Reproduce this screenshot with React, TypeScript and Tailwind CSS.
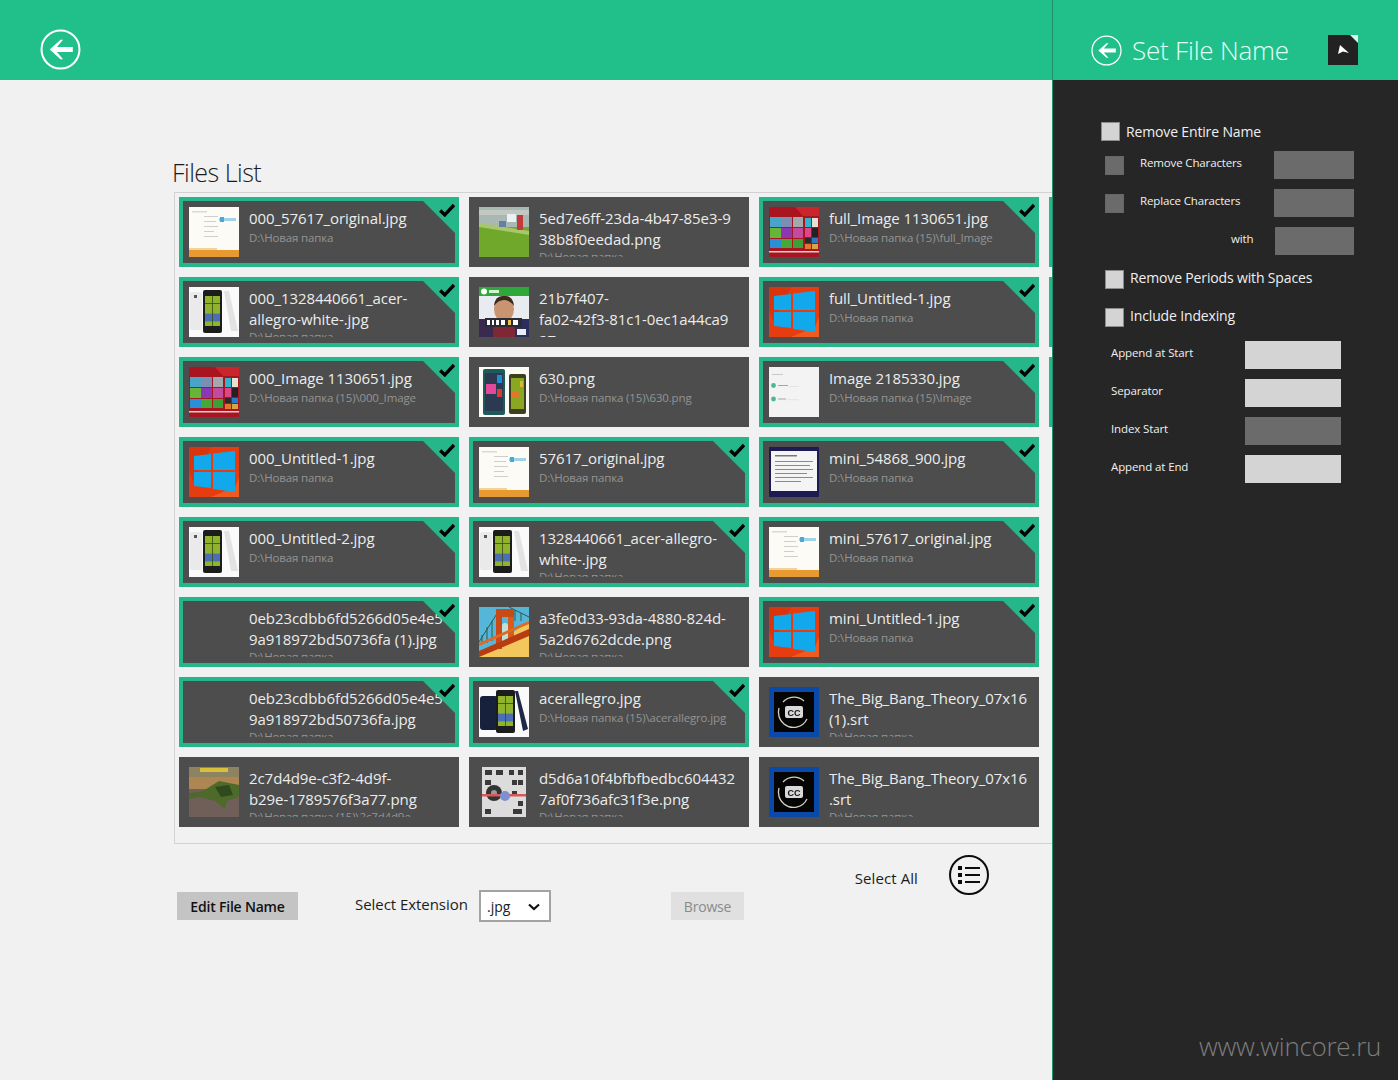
const FONT = "font-['Open_Sans','Liberation_Sans',sans-serif]";

type ThumbKind =
  | "doc" | "phone" | "metro" | "win" | "soccer" | "fifa" | "lumia" | "paper" | "slide"
  | "bridge" | "navy" | "road" | "remote" | "cc" | "none";

type FileItem = { lines: string[]; path: string; thumb: ThumbKind; selected?: boolean };

const files: FileItem[] = [
  { lines: ["000_57617_original.jpg"], path: "D:\\Новая папка", thumb: "doc", selected: true },
  { lines: ["5ed7e6ff-23da-4b47-85e3-9", "38b8f0eedad.png"], path: "D:\\Новая папка", thumb: "soccer" },
  { lines: ["full_Image 1130651.jpg"], path: "D:\\Новая папка (15)\\full_Image", thumb: "metro", selected: true },
  { lines: ["000_1328440661_acer-", "allegro-white-.jpg"], path: "D:\\Новая папка", thumb: "phone", selected: true },
  { lines: ["21b7f407-", "fa02-42f3-81c1-0ec1a44ca9", "27.png"], path: "", thumb: "fifa" },
  { lines: ["full_Untitled-1.jpg"], path: "D:\\Новая папка", thumb: "win", selected: true },
  { lines: ["000_Image 1130651.jpg"], path: "D:\\Новая папка (15)\\000_Image", thumb: "metro", selected: true },
  { lines: ["630.png"], path: "D:\\Новая папка (15)\\630.png", thumb: "lumia" },
  { lines: ["Image 2185330.jpg"], path: "D:\\Новая папка (15)\\Image", thumb: "slide", selected: true },
  { lines: ["000_Untitled-1.jpg"], path: "D:\\Новая папка", thumb: "win", selected: true },
  { lines: ["57617_original.jpg"], path: "D:\\Новая папка", thumb: "doc", selected: true },
  { lines: ["mini_54868_900.jpg"], path: "D:\\Новая папка", thumb: "paper", selected: true },
  { lines: ["000_Untitled-2.jpg"], path: "D:\\Новая папка", thumb: "phone", selected: true },
  { lines: ["1328440661_acer-allegro-", "white-.jpg"], path: "D:\\Новая папка", thumb: "phone", selected: true },
  { lines: ["mini_57617_original.jpg"], path: "D:\\Новая папка", thumb: "doc", selected: true },
  { lines: ["0eb23cdbb6fd5266d05e4e5", "9a918972bd50736fa (1).jpg"], path: "D:\\Новая папка", thumb: "none", selected: true },
  { lines: ["a3fe0d33-93da-4880-824d-", "5a2d6762dcde.png"], path: "D:\\Новая папка", thumb: "bridge" },
  { lines: ["mini_Untitled-1.jpg"], path: "D:\\Новая папка", thumb: "win", selected: true },
  { lines: ["0eb23cdbb6fd5266d05e4e5", "9a918972bd50736fa.jpg"], path: "D:\\Новая папка", thumb: "none", selected: true },
  { lines: ["acerallegro.jpg"], path: "D:\\Новая папка (15)\\acerallegro.jpg", thumb: "navy", selected: true },
  { lines: ["The_Big_Bang_Theory_07x16", "(1).srt"], path: "D:\\Новая папка", thumb: "cc" },
  { lines: ["2c7d4d9e-c3f2-4d9f-", "b29e-1789576f3a77.png"], path: "D:\\Новая папка (15)\\2c7d4d9e", thumb: "road" },
  { lines: ["d5d6a10f4bfbfbedbc604432", "7af0f736afc31f3e.png"], path: "D:\\Новая папка", thumb: "remote" },
  { lines: ["The_Big_Bang_Theory_07x16", ".srt"], path: "D:\\Новая папка", thumb: "cc" },
];

const rows = Array.from({ length: 8 }, (_, i) => files.slice(i * 3, i * 3 + 3));

function Phone({ x, w = 16, y = 7, h = 36 }: { x: number; w?: number; y?: number; h?: number }) {
  const sx = x + 2;
  const sw = w - 4;
  return (
    <g>
      <rect x={x} y={y} width={w} height={h} rx="2" fill="#1c1c1c" />
      <rect x={sx} y={y + 6} width={sw} height={h - 13} fill="#8fb32a" />
      <rect x={sx} y={y + h * 0.55} width={sw} height={h * 0.18} fill="#4a6fb5" />
      <rect x={sx + sw / 2 - 0.4} y={y + 6} width="0.8" height={h - 13} fill="#3c4a14" />
      <rect x={sx} y={y + 13} width={sw} height="0.8" fill="#3c4a14" />
    </g>
  );
}

function Thumb({ kind }: { kind: ThumbKind }) {
  if (kind === "none") return <div className="h-[50px] w-[50px] shrink-0" />;
  return (
    <div className="h-[50px] w-[50px] shrink-0 overflow-hidden">
      <svg viewBox="0 0 50 50" className="h-[50px] w-[50px] blur-[0.4px]">
        {kind === "doc" && (
          <g>
            <rect width="50" height="50" fill="#fdfbf5" />
            <rect x="3" y="4" width="15" height="1.5" fill="#d5dadd" />
            <rect x="15" y="9" width="14" height="1" fill="#cfcfcf" />
            <rect x="15" y="14" width="12" height="1" fill="#cfcfcf" />
            <rect x="15" y="19" width="14" height="1" fill="#cfcfcf" />
            <rect x="15" y="24" width="10" height="1" fill="#cfcfcf" />
            <rect x="15" y="29" width="14" height="1" fill="#cfcfcf" />
            <rect x="30" y="11" width="17" height="3" fill="#9fd3ea" />
            <rect x="31" y="10" width="4" height="5" fill="#4aa9d8" />
            <rect y="43" width="50" height="7" fill="#e89a30" />
            <rect y="41" width="28" height="2" fill="#f3d39d" />
          </g>
        )}
        {kind === "phone" && (
          <g>
            <rect width="50" height="50" fill="#fafafa" />
            <rect x="1" y="5" width="12" height="38" rx="2" fill="#eaeaea" />
            <rect x="5" y="8" width="3" height="3" fill="#555" />
            <Phone x={14} w={19} y={3} h={43} />
            <polygon points="35,4 40,4 49,44 42,44" fill="#e3e3e3" />
          </g>
        )}
        {kind === "metro" && (
          <g>
            <rect width="50" height="50" fill="#a81420" />
            <polygon points="26,0 50,0 50,9 34,9" fill="#c9262c" />
            <rect x="1" y="10" width="11" height="10" fill="#4aa3c9" />
            <rect x="12" y="10" width="11" height="10" fill="#7b8fb5" />
            <rect x="24" y="10" width="10" height="10" fill="#a3a8ac" />
            <rect x="1" y="21" width="11" height="10" fill="#66b538" />
            <rect x="12" y="21" width="11" height="10" fill="#8c38b4" />
            <rect x="24" y="21" width="10" height="10" fill="#c24ba0" />
            <rect x="1" y="32" width="11" height="9" fill="#2b8fd8" />
            <rect x="12" y="32" width="11" height="9" fill="#45a938" />
            <rect x="24" y="32" width="10" height="9" fill="#3f9e36" />
            <rect x="36" y="11" width="6" height="9" fill="#31b3c9" />
            <rect x="43" y="11" width="6" height="9" fill="#e6e0d2" />
            <rect x="36" y="21" width="6" height="9" fill="#e04588" />
            <rect x="43" y="21" width="6" height="9" fill="#222" />
            <rect x="36" y="31" width="6" height="5" fill="#2a2a2a" />
            <rect x="43" y="31" width="6" height="5" fill="#2e78c8" />
            <rect x="36" y="37" width="6" height="5" fill="#e5752b" />
            <rect x="43" y="37" width="6" height="5" fill="#d9a544" />
            <rect y="44" width="50" height="1.5" fill="#e2cfcf" />
          </g>
        )}
        {kind === "win" && (
          <g>
            <rect width="50" height="50" fill="#e53d10" />
            <polygon points="0,0 22,0 4,34 0,24" fill="#d9340c" />
            <polygon points="50,50 22,50 46,40 50,30" fill="#f15a1e" />
            <polygon points="5,9 22,7 22,23 5,23" fill="#12a9ec" />
            <polygon points="24,6.5 46,4 46,23 24,23" fill="#12a9ec" />
            <polygon points="5,25 22,25 22,41 5,39" fill="#12a9ec" />
            <polygon points="24,25 46,25 46,45 24,42" fill="#12a9ec" />
          </g>
        )}
        {kind === "soccer" && (
          <g>
            <rect width="50" height="50" fill="#6fa82b" />
            <rect width="50" height="20" fill="#a9b8b2" />
            <rect y="3" width="50" height="5" fill="#c2c9c3" />
            <rect y="20" width="50" height="30" fill="#6fa82b" />
            <polygon points="0,16 50,24 50,28 0,20" fill="#a6c76b" />
            <rect x="28" y="7" width="9" height="8" fill="#e9f1f4" />
            <rect x="38" y="8" width="6" height="15" fill="#c23a3a" />
            <rect x="20" y="14" width="7" height="6" fill="#647fa3" />
          </g>
        )}
        {kind === "fifa" && (
          <g>
            <rect width="50" height="50" fill="#e8ebef" />
            <rect width="50" height="9" fill="#2fa83a" />
            <circle cx="5" cy="4.5" r="3" fill="#fff" />
            <rect x="10" y="3" width="10" height="3" fill="#d5f0d5" />
            <rect y="32" width="16" height="18" fill="#3a2a4f" />
            <rect x="34" y="32" width="16" height="18" fill="#2c2f5e" />
            <rect x="14" y="34" width="22" height="16" fill="#7f2735" />
            <ellipse cx="25" cy="22" rx="10" ry="13" fill="#c99570" />
            <path d="M15 19 Q16 8 25 9 Q34 8 35 19 Q31 13 25 13 Q19 13 15 19Z" fill="#3b2a1d" />
            <rect x="6" y="31" width="37" height="9" fill="#2b2b33" />
            <rect x="8" y="33" width="3" height="5" fill="#fff" />
            <rect x="13" y="33" width="2" height="5" fill="#fff" />
            <rect x="17" y="33" width="3" height="5" fill="#fff" />
            <rect x="22" y="33" width="4" height="5" fill="#fff" />
            <rect x="29" y="33" width="3" height="5" fill="#f1c34d" />
            <rect x="34" y="33" width="5" height="5" fill="#fff" />
            <rect x="38" y="42" width="9" height="6" fill="#e8eef5" />
          </g>
        )}
        {kind === "lumia" && (
          <g>
            <rect width="50" height="50" fill="#fbfbf6" />
            <rect x="4" y="2" width="22" height="46" rx="2" fill="#1e5a5a" />
            <rect x="6" y="6" width="18" height="38" fill="#2b3a50" />
            <rect x="7" y="17" width="10" height="10" fill="#e3489a" />
            <rect x="18" y="8" width="5" height="8" fill="#1a8fd5" />
            <rect x="18" y="22" width="5" height="8" fill="#d93a3a" />
            <rect x="30" y="7" width="17" height="40" rx="2" fill="#3d3f1f" />
            <rect x="32" y="11" width="13" height="31" fill="#8aa722" />
            <rect x="33" y="24" width="7" height="7" fill="#e0772b" />
            <rect x="41" y="14" width="3" height="6" fill="#d5b933" />
          </g>
        )}
        {kind === "paper" && (
          <g>
            <rect width="50" height="50" fill="#1d1b52" />
            <rect x="2" y="4" width="46" height="40" fill="#f4f4f4" />
            <rect x="6" y="8" width="22" height="1.5" fill="#777" />
            <rect x="6" y="14" width="38" height="1" fill="#8a8a8a" />
            <rect x="6" y="18" width="35" height="1" fill="#8a8a8a" />
            <rect x="6" y="22" width="38" height="1" fill="#8a8a8a" />
            <rect x="6" y="26" width="32" height="1" fill="#8a8a8a" />
            <rect x="6" y="30" width="38" height="1" fill="#8a8a8a" />
            <rect x="6" y="34" width="26" height="1" fill="#8a8a8a" />
          </g>
        )}
        {kind === "slide" && (
          <g>
            <rect width="50" height="50" fill="#f3f3f3" />
            <rect x="3" y="7" width="11" height="1" fill="#c8c8c8" />
            <circle cx="4.5" cy="18.5" r="2.4" fill="#48b89a" />
            <circle cx="4.5" cy="32" r="2.4" fill="#48b89a" />
            <rect x="9" y="18" width="10" height="1" fill="#a5a5a5" />
            <rect x="20" y="19" width="10" height="0.6" fill="#dadada" />
            <rect x="9" y="31.5" width="8" height="1" fill="#a5a5a5" />
            <rect x="18" y="32.5" width="12" height="0.6" fill="#dadada" />
          </g>
        )}
        {kind === "bridge" && (
          <g>
            <rect width="50" height="50" fill="#56b6d9" />
            <polygon points="0,50 50,14 50,50" fill="#f4c75c" />
            <path d="M0 35 L19 5 M50 10 L30 0" stroke="#2f5a4a" strokeWidth="1" />
            <path d="M3 35 L3 28 M8 36 L8 20 M13 34 L13 14 M36 14 L36 3 M42 14 L42 6" stroke="#2f5a4a" strokeWidth="1" />
            <rect x="17" y="2" width="6" height="40" fill="#c84a16" />
            <rect x="29" y="2" width="6" height="30" fill="#d85c1c" />
            <rect x="17" y="2" width="18" height="8" fill="#c84a16" />
            <rect x="23" y="16" width="6" height="22" rx="3" fill="#bfe0d8" />
            <polygon points="0,44 50,22 50,29 0,50" fill="#b83c12" />
            <polygon points="0,36 50,14 50,17 0,39" fill="#e06a22" />
          </g>
        )}
        {kind === "navy" && (
          <g>
            <rect width="50" height="50" fill="#fafafa" />
            <rect x="1" y="9" width="18" height="34" rx="3" fill="#17213c" />
            <Phone x={17} w={19} y={3} h={43} />
            <polygon points="36,4 39,4 49,42 44,44" fill="#1d2947" />
          </g>
        )}
        {kind === "road" && (
          <g>
            <rect width="50" height="50" fill="#6f5f58" />
            <rect width="50" height="10" fill="#8c8460" />
            <rect x="11" y="1" width="28" height="4" fill="#d8c03a" />
            <rect y="10" width="50" height="12" fill="#ad8652" />
            <polygon points="0,26 14,24 30,14 50,18 50,30 38,34 36,42 26,34 10,30 0,32" fill="#4d6a2a" />
            <polygon points="26,20 40,18 44,28 32,30" fill="#2f4a1c" />
          </g>
        )}
        {kind === "remote" && (
          <g>
            <rect width="50" height="50" fill="#4d4d4d" />
            <rect x="3" y="0" width="44" height="50" fill="#dcdcdc" />
            <g fill="#3a3a3a">
              <rect x="6" y="3" width="7" height="5" /><rect x="17" y="3" width="7" height="5" /><rect x="30" y="3" width="5" height="5" /><rect x="39" y="3" width="5" height="5" />
              <rect x="6" y="13" width="6" height="5" /><rect x="33" y="13" width="5" height="5" /><rect x="39" y="13" width="5" height="5" />
              <rect x="33" y="24" width="5" height="5" /><rect x="39" y="34" width="5" height="5" />
              <rect x="6" y="42" width="6" height="5" /><rect x="34" y="42" width="9" height="5" />
            </g>
            <circle cx="15" cy="26" r="8" fill="#333" />
            <circle cx="15" cy="26" r="3" fill="#999" />
            <rect x="3" y="27" width="44" height="2.5" fill="#d8585a" />
            <circle cx="26" cy="29" r="5" fill="#7f8fd0" />
          </g>
        )}
        {kind === "cc" && (
          <g>
            <rect width="50" height="50" fill="#0b49a8" />
            <rect x="5" y="5" width="40" height="40" fill="#050505" />
            <path d="M14 15 A15 15 0 0 1 35 14 M38 32 A15 15 0 0 1 15 37 A15 15 0 0 1 10 21" fill="none" stroke="#d8d0c0" strokeWidth="1.3" />
            <rect x="16" y="19" width="18" height="12" rx="2" fill="#d9d9d9" />
            <text x="25" y="28.5" textAnchor="middle" fontSize="9" fontWeight="700" fill="#111" fontFamily="Liberation Sans">CC</text>
          </g>
        )}
      </svg>
    </div>
  );
}

function FileCard({ item }: { item: FileItem }) {
  return (
    <div className={`relative flex h-[70px] w-[280px] shrink-0 gap-[10px] overflow-hidden bg-[#4d4d4d] p-[10px] ${item.selected ? "ring-4 ring-inset ring-[#25b78a]" : ""}`}>
      <Thumb kind={item.thumb} />
      <div className="h-[50px] min-w-0 flex-1 overflow-hidden pt-px">
        {item.lines.map((line) => (
          <div key={line} className="h-[21px] whitespace-nowrap text-[15px] leading-[21px] tracking-[-0.07px] text-[#ececec]">
            {line}
          </div>
        ))}
        {item.path ? (
          <div className={`whitespace-nowrap text-[11.5px] leading-[16px] tracking-[-0.15px] text-[#949494] ${item.lines.length > 1 ? "-mt-px" : "mt-px"}`}>{item.path}</div>
        ) : null}
      </div>
      {item.selected ? (
        <>
          <div className="absolute right-0 top-0 h-0 w-0 border-l-[40px] border-t-[40px] border-l-transparent border-t-[#25b78a]" />
          <svg viewBox="0 0 16 14" className="absolute right-[4px] top-[6px] h-[14px] w-4">
            <path d="M1.2 7.5 L5.8 11.8 L15 2" fill="none" stroke="#000" strokeWidth="3.4" />
          </svg>
        </>
      ) : null}
    </div>
  );
}

function BackCircle({ size, stroke }: { size: number; stroke: number }) {
  return (
    <svg viewBox="0 0 40 40" width={size} height={size} className="shrink-0">
      <circle cx="20" cy="20" r={19.5 - stroke / 2} fill="none" stroke="#fff" strokeWidth={stroke} />
      <path d="M20 10.5 L9.5 20 L20 29.5 L22.5 29.5 L16.5 22.5 L32 22.5 L32 17.5 L16.5 17.5 L22.5 10.5Z" fill="#fff" />
    </svg>
  );
}

function Check({ dark }: { dark?: boolean }) {
  return (
    <div className={`h-[19px] w-[19px] shrink-0 border ${dark ? "border-[#666] bg-[#6b6b6b]" : "border-[#8c8c8c] bg-[#d4d4d4]"}`} />
  );
}

function SideField({ label, light }: { label: string; light?: boolean }) {
  return (
    <div className="flex h-7 items-center pl-[58px]">
      <span className="mb-[5px] w-[134px] text-[11.5px] tracking-[-0.12px] text-[#f0f0f0]">{label}</span>
      <div className={`h-7 w-[96px] ${light ? "bg-[#d4d4d4]" : "bg-[#6b6b6b]"}`} />
    </div>
  );
}

export default function App() {
  return (
    <div className={`flex h-[1080px] w-[1398px] overflow-hidden bg-[#f1f1f1] ${FONT}`}>
      <main className="flex w-[1052px] shrink-0 flex-col">
        <header className="flex h-20 items-center bg-[#21c08b] pl-10 pt-[19px]">
          <BackCircle size={41} stroke={2} />
        </header>
        <h1 className="ml-[172px] mt-[61px] h-[51px] text-[25px] font-light leading-[62px] tracking-[-0.5px] text-[#1c1c1c]">
          Files List
        </h1>
        <section className="ml-[174px] flex h-[652px] flex-col gap-[10px] overflow-hidden border-y border-l border-[#d2d2d2] pl-1 pt-1">
          {rows.map((row, i) => (
            <div key={i} className="flex gap-[10px]">
              {row.map((item) => (
                <FileCard key={item.lines.join("")} item={item} />
              ))}
              {i < 3 ? <div className="h-[70px] w-[4px] shrink-0 bg-[#25b78a]" /> : null}
            </div>
          ))}
        </section>
        <div className="flex items-start pl-[177px] pr-[63px] pt-[11px]">
          <div className="mt-[37px] flex items-start">
            <button className="h-7 w-[121px] bg-[#c4c4c4] text-[14px] font-semibold tracking-[-0.2px] text-[#111]">Edit File Name</button>
            <span className="ml-[57px] mt-[1px] w-[113px] whitespace-nowrap text-[15px] tracking-[-0.05px] text-[#1c1c1c]">Select Extension</span>
            <div className="relative ml-[11px] mt-[-2px] flex h-8 w-[72px] items-center border-2 border-[#a3a3a3] bg-white pl-[6px] text-[14px] text-[#222]">
              .jpg
              <svg viewBox="0 0 12 8" className="absolute right-[9px] top-[11px] h-2 w-3">
                <path d="M1 1.5 L6 6 L11 1.5" fill="none" stroke="#111" strokeWidth="2.2" />
              </svg>
            </div>
            <button className="ml-[120px] h-7 w-[73px] bg-[#e0e0e0] text-[14px] tracking-[-0.2px] text-[#8a8a8a]">Browse</button>
          </div>
          <div className="ml-auto flex items-center">
            <span className="mt-[6px] text-[15px] tracking-[0.1px] text-[#1c1c1c]">Select All</span>
            <svg viewBox="0 0 40 40" className="ml-[31px] h-10 w-10">
              <circle cx="20" cy="20" r="19" fill="#f1f1f1" stroke="#0c0c0c" strokeWidth="2" />
              <rect x="9" y="11" width="4" height="4" fill="#0c0c0c" />
              <rect x="9" y="18" width="4" height="4" fill="#0c0c0c" />
              <rect x="9" y="25" width="4" height="4" fill="#0c0c0c" />
              <rect x="16" y="12" width="15" height="2" fill="#0c0c0c" />
              <rect x="16" y="19" width="15" height="2" fill="#0c0c0c" />
              <rect x="16" y="26" width="15" height="2" fill="#0c0c0c" />
            </svg>
          </div>
        </div>
      </main>

      <aside className="relative flex w-[346px] shrink-0 flex-col border-l border-[#1d8f6c] bg-[#262626]">
        <header className="flex h-20 items-center bg-[#21c08b] pl-[38px] pt-5">
          <BackCircle size={31} stroke={1.6} />
          <h2 className="ml-[10px] w-[158px] whitespace-nowrap text-[26px] font-light tracking-[-0.2px] text-[#e4fff5]">Set File Name</h2>
          <div className="relative ml-[38px] h-[30px] w-[30px] overflow-hidden bg-[#222]">
            <div className="absolute right-0 top-0 h-0 w-0 border-l-[8px] border-t-[8px] border-l-transparent border-t-[#d8f5ea]" />
            <svg viewBox="0 0 30 30" className="h-full w-full">
              <path d="M12 10 L21 18 L15 16.5 L10 19 Z" fill="#fff" />
            </svg>
          </div>
        </header>
        <div className="flex flex-col gap-[10px] pt-[42px]">
          <div className="flex h-[19px] items-center pl-[48px]">
            <Check />
            <span className="ml-[6px] text-[14px] tracking-[-0.15px] text-[#f0f0f0]">Remove Entire Name</span>
          </div>
          <div className="flex h-7 items-center pl-[52px]">
            <Check dark />
            <span className="mb-[4px] ml-[16px] w-[134px] text-[11.5px] tracking-[-0.14px] text-[#f0f0f0]">Remove Characters</span>
            <div className="h-7 w-[80px] bg-[#6b6b6b]" />
          </div>
          <div className="flex h-7 items-center pl-[52px]">
            <Check dark />
            <span className="mb-[4px] ml-[16px] w-[134px] text-[11.5px] tracking-[-0.14px] text-[#f0f0f0]">Replace Characters</span>
            <div className="h-7 w-[80px] bg-[#6b6b6b]" />
          </div>
          <div className="flex h-7 items-center pl-[178px]">
            <span className="mb-[4px] w-[44px] text-[11.5px] tracking-[-0.1px] text-[#f0f0f0]">with</span>
            <div className="h-7 w-[79px] bg-[#6b6b6b]" />
          </div>
          <div className="flex h-7 items-center pl-[52px]">
            <Check />
            <span className="mb-[3px] ml-[6px] text-[14px] tracking-[-0.15px] text-[#f0f0f0]">Remove Periods with Spaces</span>
          </div>
          <div className="flex h-7 items-center pl-[52px]">
            <Check />
            <span className="mb-[3px] ml-[6px] text-[14px] tracking-[-0.15px] text-[#f0f0f0]">Include Indexing</span>
          </div>
          <SideField label="Append at Start" light />
          <SideField label="Separator" light />
          <SideField label="Index Start" />
          <SideField label="Append at End" light />
        </div>
        <div className="absolute bottom-[14px] right-[17px] text-[26px] font-light tracking-[-0.3px] text-[#7d7d7d]">www.wincore.ru</div>
      </aside>
    </div>
  );
}
